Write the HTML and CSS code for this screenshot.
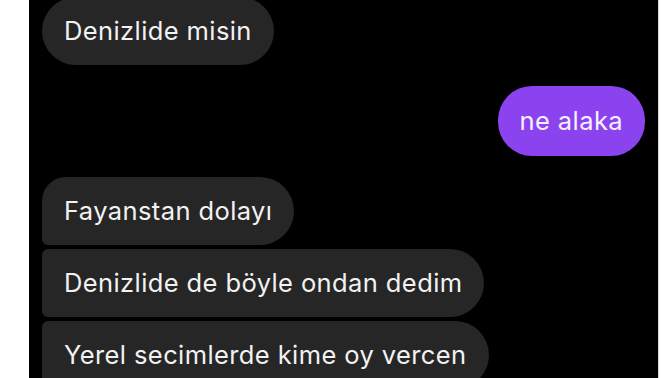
FILE: index.html
```html
<!DOCTYPE html>
<html lang="tr">
<head>
  <meta charset="UTF-8" />
  <meta name="viewport" content="width=device-width, initial-scale=1.0"/>
  <title>Sohbet</title>
  <link rel="stylesheet" href="styles.css">
</head>
<body>

  <div class="chat">
    <div class="msg in single first-msg">Denizlide misin</div>

    <div class="msg out">ne alaka</div>

    <div class="group">
      <div class="msg in top">Fayanstan dolayı</div>
      <div class="msg in mid">Denizlide de böyle ondan dedim</div>
      <div class="msg in mid">Yerel secimlerde kime oy vercen</div>
    </div>
  </div>

</body>
</html>
```

FILE: styles.css
```css
html, body {
  margin: 0;
  padding: 0;
  height: 100%;
  background: #fff;
  font-family: Inter, "Noto Sans", sans-serif;
  overflow: hidden;
}

.chat {
  margin-left: 29px;
  width: 630px;
  height: 100%;
  box-sizing: border-box;
  padding: 0 13px;
  background: #000;
  border-right: 1px solid #d8d8d8;
  display: flex;
  flex-direction: column;
  align-items: flex-start;
  gap: 21px;
}

.group {
  display: flex;
  flex-direction: column;
  align-items: flex-start;
  gap: 4px;
}

.msg {
  font-size: 25.5px;
  letter-spacing: 0.4px;
  line-height: 30px;
  padding: 19px 22px;
  border-radius: 34px;
  color: #f2f2f2;
  background: #262626;
  white-space: nowrap;
}

.first-msg {
  margin-top: -3px;
}

.out {
  align-self: flex-end;
  background: #8b43ef;
  color: #f6f0ff;
  padding: 20px 22px;
}

.in.top {
  border-top-left-radius: 24px;
  border-bottom-left-radius: 6px;
}

.in.mid {
  border-top-left-radius: 6px;
  border-bottom-left-radius: 6px;
}
```
